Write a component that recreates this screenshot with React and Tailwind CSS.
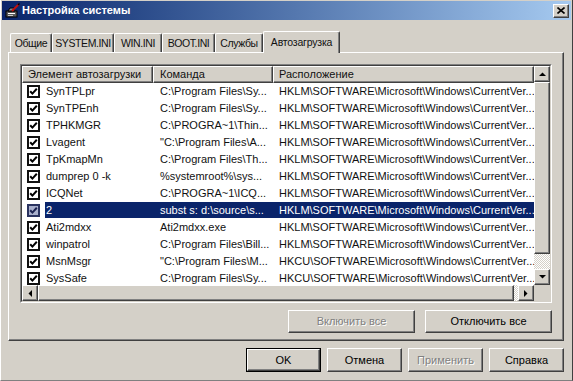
import React from 'react';

const raised = 'border border-t-white border-l-white border-r-[#404040] border-b-[#404040] shadow-[inset_-1px_-1px_0_#808080]';
const dither = 'bg-[repeating-conic-gradient(#ffffff_0_25%,#d4d0c8_0_50%)] bg-[length:2px_2px]';

const HKLM = 'HKLM\\SOFTWARE\\Microsoft\\Windows\\CurrentVer...';
const HKCU = 'HKCU\\SOFTWARE\\Microsoft\\Windows\\CurrentVer...';

const rows = [
  ['SynTPLpr', 'C:\\Program Files\\Sy...', HKLM],
  ['SynTPEnh', 'C:\\Program Files\\Sy...', HKLM],
  ['TPHKMGR', 'C:\\PROGRA~1\\Thin...', HKLM],
  ['Lvagent', '"C:\\Program Files\\A...', HKLM],
  ['TpKmapMn', 'C:\\Program Files\\Th...', HKLM],
  ['dumprep 0 -k', '%systemroot%\\sys...', HKLM],
  ['ICQNet', 'C:\\PROGRA~1\\ICQ...', HKLM],
  ['2', 'subst s: d:\\source\\s...', HKLM, true],
  ['Ati2mdxx', 'Ati2mdxx.exe', HKLM],
  ['winpatrol', 'C:\\Program Files\\Bill...', HKLM],
  ['MsnMsgr', '"C:\\Program Files\\M...', HKCU],
  ['SysSafe', 'C:\\Program Files\\Sy...', HKCU],
];

const tabs = [
  ['Общие', 'w-[42px]'],
  ['SYSTEM.INI', 'w-[62px]'],
  ['WIN.INI', 'w-[48px]'],
  ['BOOT.INI', 'w-[53px]'],
  ['Службы', 'w-[48px]'],
];

function Arrow({ dir }) {
  const pts = {
    up: '0,4 3.5,0.5 7,4',
    down: '0,0 3.5,3.5 7,0',
    left: '4,0 0.5,3.5 4,7',
    right: '0,0 3.5,3.5 0,7',
  }[dir];
  const vertical = dir === 'up' || dir === 'down';
  return (
    <svg width={vertical ? 7 : 4} height={vertical ? 4 : 7} viewBox={vertical ? '0 0 7 4' : '0 0 4 7'}>
      <polygon points={pts} fill="#000" />
    </svg>
  );
}

function ScrollBtn({ dir }) {
  return (
    <div className={`w-[16px] h-[16px] shrink-0 bg-[#d4d0c8] flex items-center justify-center ${raised}`}>
      <Arrow dir={dir} />
    </div>
  );
}

function Checkbox({ selected }) {
  return (
    <div className={`w-[13px] h-[13px] shrink-0 border-2 flex items-center justify-center ${selected ? 'border-[#2a3360] bg-[#a9b0cc]' : 'border-[#111] bg-white'}`}>
      <svg width="9" height="9" viewBox="0 0 9 9">
        <polyline points="1.2,4.2 3.4,6.6 7.8,1.8" fill="none" stroke={selected ? '#1c2352' : '#000'} strokeWidth="2" />
      </svg>
    </div>
  );
}

function Button({ children, disabled, primary, className = '' }) {
  return (
    <div className={`${primary ? 'border border-black' : ''} ${className}`}>
      <div className={`h-full w-full bg-[#d4d0c8] flex items-center justify-center ${raised} ${disabled ? 'text-[#808080] [text-shadow:1px_1px_0_#fff]' : 'text-black'}`}>
        {children}
      </div>
    </div>
  );
}

export default function App() {
  return (
    <div className="w-[573px] h-[381px] bg-[#d4d0c8] overflow-hidden flex flex-col text-[11px] leading-none text-[#111] font-['Liberation_Sans',Arial,sans-serif] border-l border-l-white border-b border-b-[#808080] border-r border-r-[#404040]">
      {/* Title bar */}
      <div className="mx-[1px] mt-[1px] h-[19px] shrink-0 flex items-center bg-linear-to-r from-[#0a246a] to-[#a6caf0] pl-[3px] pr-[2px]">
        <svg width="16" height="16" viewBox="0 0 16 16" className="shrink-0">
          <rect x="1" y="8" width="11" height="6" fill="#5a5a5a" stroke="#000" strokeWidth="1" />
          <rect x="3" y="10" width="7" height="1" fill="#fff" />
          <rect x="3" y="12" width="5" height="1" fill="#c8c8c8" />
          <path d="M3 8 L5 5 L9 5 L10 8 Z" fill="#8a8a8a" stroke="#000" strokeWidth="1" />
          <line x1="7" y1="8" x2="14" y2="1" stroke="#c01010" strokeWidth="2" />
          <line x1="13" y1="2" x2="14.5" y2="0.5" stroke="#000" strokeWidth="1.5" />
        </svg>
        <span className="ml-[1px] text-white font-bold text-[11px]">Настройка системы</span>
        <div className={`ml-auto w-[16px] h-[14px] bg-[#d4d0c8] flex items-center justify-center ${raised}`}>
          <svg width="8" height="7" viewBox="0 0 8 7">
            <path d="M0.5 0.5 L7.5 6.5 M7.5 0.5 L0.5 6.5" stroke="#000" strokeWidth="1.6" />
          </svg>
        </div>
      </div>

      <div className="pl-[7px] pr-[8px] flex flex-col">
        {/* Tabs */}
        <div className="mt-[11px] h-[22px] mb-[-1px] flex items-end pl-[2px] relative z-10 whitespace-nowrap">
          {tabs.map(([t, w]) => (
            <div key={t} className={`${w} h-[19px] mb-[1px] flex items-center justify-center bg-[#d4d0c8] text-[10.5px] tracking-[-0.4px] border-t border-l border-t-white border-l-white border-r border-r-[#404040] shadow-[inset_-1px_0_0_#808080] rounded-t-[2px]`}>
              {t}
            </div>
          ))}
          <div className="w-[77px] h-[22px] flex items-center justify-center pb-[1px] bg-[#d4d0c8] text-[10.5px] tracking-[-0.2px] border-t border-l border-t-white border-l-white border-r border-r-[#404040] shadow-[inset_-1px_0_0_#808080] rounded-t-[2px]">
            Автозагрузка
          </div>
        </div>

        {/* Panel */}
        <div className="h-[289px] flex flex-col px-[11px] pt-[11px] border border-t-white border-l-white border-r-[#404040] border-b-[#404040] shadow-[inset_-1px_-1px_0_#808080]">
          {/* List */}
          <div className="h-[239px] border border-t-[#808080] border-l-[#808080] border-r-white border-b-white">
            <div className="h-full flex flex-col bg-white border border-t-[#404040] border-l-[#404040] border-r-[#d4d0c8] border-b-[#d4d0c8]">
              <div className="h-[219px] flex">
                <div className="flex-1 overflow-hidden flex flex-col">
                  {/* Header */}
                  <div className="h-[17px] shrink-0 flex bg-[#d4d0c8]">
                    <div className={`w-[131px] h-full flex items-center pl-[5px] ${raised}`}>Элемент автозагрузки</div>
                    <div className={`w-[120px] h-full flex items-center pl-[6px] ${raised}`}>Команда</div>
                    <div className={`flex-1 h-full flex items-center pl-[5px] ${raised}`}>Расположение</div>
                  </div>
                  {rows.map(([name, cmd, loc, sel]) => (
                    <div key={name} className="h-[17px] shrink-0 flex items-start">
                      <div className="pl-[5px] pr-[5px] h-[16px] flex items-center">
                        <Checkbox selected={sel} />
                      </div>
                      <div className={`flex-1 h-[16px] flex items-center whitespace-nowrap ${sel ? 'bg-[#0a246a] text-white' : ''}`}>
                        <div className="w-[108px] pl-[1px] overflow-hidden">{name}</div>
                        <div className="w-[120px] pl-[7px] overflow-hidden">{cmd}</div>
                        <div className="flex-1 pl-[6px] overflow-hidden">{loc}</div>
                      </div>
                    </div>
                  ))}
                </div>
                {/* Vertical scrollbar */}
                <div className="w-[16px] flex flex-col">
                  <ScrollBtn dir="up" />
                  <div className={`h-[172px] bg-[#d4d0c8] ${raised}`} />
                  <div className={`flex-1 ${dither}`} />
                  <ScrollBtn dir="down" />
                </div>
              </div>
              {/* Horizontal scrollbar */}
              <div className="h-[16px] flex">
                <ScrollBtn dir="left" />
                <div className={`w-[476px] bg-[#d4d0c8] ${raised}`} />
                <div className={`flex-1 ${dither}`} />
                <ScrollBtn dir="right" />
                <div className="w-[16px] bg-[#d4d0c8]" />
              </div>
            </div>
          </div>

          <div className="mt-[7px] flex justify-end gap-[10px]">
            <Button disabled className="w-[127px] h-[23px]">Включить все</Button>
            <Button className="w-[127px] h-[23px]">Отключить все</Button>
          </div>
        </div>

        {/* Dialog buttons */}
        <div className="mt-[7px] flex justify-end gap-[6px]">
          <Button primary className="w-[75px] h-[24px]">OK</Button>
          <Button className="w-[75px] h-[24px]">Отмена</Button>
          <Button disabled className="w-[75px] h-[24px]">Применить</Button>
          <Button className="w-[75px] h-[24px]">Справка</Button>
        </div>
      </div>
    </div>
  );
}
